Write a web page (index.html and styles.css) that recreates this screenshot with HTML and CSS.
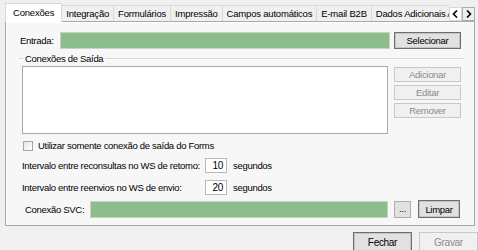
FILE: index.html
```html
<!DOCTYPE html>
<html lang="pt-br">
<head>
    <meta charset="UTF-8">
    <title>Configurações - Conexões</title>
    <link rel="stylesheet" href="styles.css">
</head>
<body>
    <div class="tab-control">
        <div class="tab-strip">
            <div class="tab-list">
                <div class="tab active">Conexões</div>
                <div class="tab">Integração</div>
                <div class="tab">Formulários</div>
                <div class="tab">Impressão</div>
                <div class="tab">Campos automáticos</div>
                <div class="tab">E-mail B2B</div>
                <div class="tab">Dados Adicionais ANS</div>
            </div>
            <div class="tab-scroll">
                <span class="scroll-btn left">
                    <svg width="7" height="8" viewBox="0 0 7 8"><path d="M5 0.5 L1.5 4 L5 7.5" fill="none" stroke="#000" stroke-width="1.6"/></svg>
                </span>
                <span class="scroll-btn right">
                    <svg width="7" height="8" viewBox="0 0 7 8"><path d="M2 0.5 L5.5 4 L2 7.5" fill="none" stroke="#000" stroke-width="1.6"/></svg>
                </span>
            </div>
        </div>

        <div class="tab-page">
            <!-- Entrada -->
            <div class="row row-entrada">
                <label class="lbl lbl-entrada">Entrada:</label>
                <div class="field green field-entrada"></div>
                <button class="btn btn-default btn-side">Selecionar</button>
            </div>

            <!-- Conexões de saída -->
            <fieldset class="group">
                <legend>Conexões de Saída</legend>
                <div class="group-body">
                    <div class="list"></div>
                    <div class="side-buttons">
                        <button class="btn btn-side btn-small" disabled>Adicionar</button>
                        <button class="btn btn-side btn-small" disabled>Editar</button>
                        <button class="btn btn-side btn-small" disabled>Remover</button>
                    </div>
                </div>
            </fieldset>

            <div class="row row-check">
                <span class="checkbox"></span>
                <span>Utilizar somente conexão de saída do Forms</span>
            </div>

            <div class="row row-interval">
                <label class="lbl lbl-interval">Intervalo entre reconsultas no WS de retomo:</label>
                <div class="num">10</div>
                <span class="unit">segundos</span>
            </div>

            <div class="row row-interval second">
                <label class="lbl lbl-interval">Intervalo entre reenvios no WS de envio:</label>
                <div class="num">20</div>
                <span class="unit">segundos</span>
            </div>

            <div class="row row-svc">
                <label class="lbl lbl-svc">Conexão SVC:</label>
                <div class="field green field-svc"></div>
                <button class="btn btn-dots">...</button>
                <button class="btn btn-default btn-limpar">Limpar</button>
            </div>
        </div>
    </div>

    <div class="footer">
        <button class="btn btn-default btn-footer">Fechar</button>
        <button class="btn btn-footer" disabled>Gravar</button>
    </div>
</body>
</html>
```

FILE: styles.css
```css
* {
    margin: 0;
    padding: 0;
    box-sizing: border-box;
}

body {
    width: 478px;
    height: 250px;
    overflow: hidden;
    background: #f0f0f0;
    font-family: "Liberation Sans", Arial, sans-serif;
    font-size: 9.5px;
    letter-spacing: -0.3px;
    color: #000;
}

/* ---------- Tabs ---------- */

.tab-control {
    margin-left: 5px;
    width: 470px;
    padding-top: 3px;
}

.tab-strip {
    display: flex;
    align-items: flex-end;
    height: 18px;
}

.tab-list {
    display: flex;
    align-items: flex-end;
    width: 444px;
    height: 100%;
    overflow-x: clip;
}

.tab {
    flex: none;
    height: 16px;
    line-height: 15px;
    padding: 0 4px;
    background: #f0f0f0;
    border: 1px solid #d9d9d9;
    border-bottom: none;
    margin-right: -1px;
    white-space: nowrap;
    font-size: 9.5px;
    letter-spacing: -0.2px;
}

.tab.active {
    position: relative;
    z-index: 1;
    height: 19px;
    line-height: 17px;
    padding: 0 7px;
    margin-bottom: -1px;
    background: #fff;
}

.tab-scroll {
    display: flex;
    align-self: flex-start;
    margin: 4px 0 0 auto;
}

.scroll-btn {
    display: flex;
    align-items: center;
    justify-content: center;
    width: 13px;
    height: 14px;
    border: 1px solid #d9d9d9;
}

.scroll-btn.left {
    background: #fff;
}

.scroll-btn.right {
    background: #f0f0f0;
    border-color: #adadad;
}

.tab-page {
    height: 205px;
    background: #f7f7f7;
    border: 1px solid #a9a9a9;
    box-shadow: inset 1px 1px 0 #fff;
    padding: 10px 0 0 14px;
}

/* ---------- Rows ---------- */

.row {
    display: flex;
    align-items: center;
}

.lbl {
    flex: none;
}

.field {
    flex: none;
    border: 1px solid #c5d3c5;
}

.green {
    background: #8dbd8a;
}

.lbl-entrada {
    width: 40px;
}

.field-entrada {
    width: 330px;
    height: 17px;
}

.btn {
    flex: none;
    font-family: inherit;
    font-size: inherit;
    letter-spacing: inherit;
    color: #000;
    background: #e1e1e1;
    border: 1px solid #adadad;
}

.btn-default {
    border-color: #6e6e6e;
    box-shadow: inset 0 0 0 1px #c4c4c4;
}

.btn:disabled {
    color: #8c8c8c;
    background: #f0f0f0;
    border-color: #c8c8c8;
    box-shadow: none;
}

.btn-side {
    width: 67px;
    height: 17px;
    margin-left: 4px;
}

/* ---------- Group ---------- */

.group {
    width: 446px;
    margin: 4px 0 0 -1px;
    border: none;
    border-top: 1px solid #d5d5d5;
    box-shadow: 0 1px 0 #fff inset;
}

.group legend {
    margin-left: 4px;
    padding: 0 2px;
}

.group-body {
    display: flex;
    align-items: flex-start;
    padding: 2px 0 0 3px;
}

.list {
    width: 366px;
    height: 68px;
    background: #fff;
    border: 1px solid #a9a9a9;
}

.side-buttons {
    display: flex;
    flex-direction: column;
    gap: 3px;
    margin-left: 2px;
    padding-top: 1px;
}

.btn-small {
    height: 15px;
}

/* ---------- Check + intervals ---------- */

.row-check {
    margin: 5px 0 0 3px;
    gap: 5px;
    height: 13px;
}

.checkbox {
    width: 10px;
    height: 10px;
    background: linear-gradient(135deg, #e4e4e4, #fff);
    border: 1px solid #a6a6a6;
}

.row-interval {
    margin: 6px 0 0 2px;
    height: 15px;
}

.row-interval.second {
    margin-top: 7px;
}

.lbl-interval {
    width: 183px;
}

.num {
    width: 22px;
    height: 15px;
    line-height: 13px;
    padding-right: 3px;
    text-align: right;
    background: #fff;
    border: 1px solid #b8b8b8;
    font-size: 10px;
}

.unit {
    margin-left: 6px;
}

.row-svc {
    margin: 5px 0 0 5px;
    height: 18px;
}

.lbl-svc {
    width: 65px;
}

.field-svc {
    width: 298px;
    height: 17px;
}

.btn-dots {
    width: 17px;
    height: 17px;
    margin-left: 6px;
    line-height: 10px;
}

.btn-limpar {
    width: 42px;
    height: 18px;
    margin-left: 7px;
}

/* ---------- Footer ---------- */

.footer {
    display: flex;
    justify-content: flex-end;
    gap: 7px;
    padding-top: 6px;
}

.btn-footer {
    width: 59px;
    height: 20px;
    font-size: 10px;
}
```
